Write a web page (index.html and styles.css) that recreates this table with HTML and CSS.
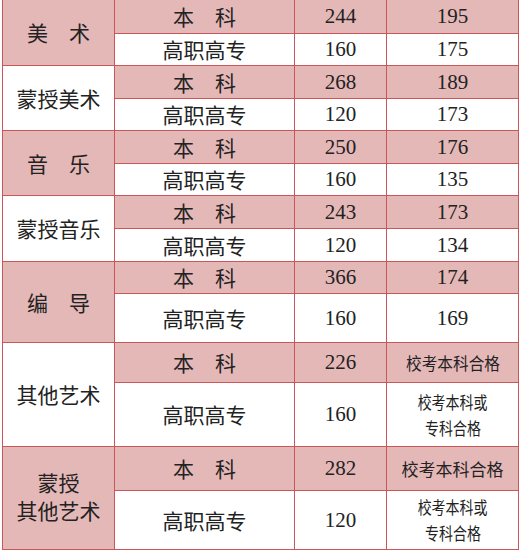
FILE: index.html
```html
<!DOCTYPE html>
<html lang="zh">
<head>
<meta charset="utf-8">
<title>艺术类分数线</title>
<link rel="stylesheet" href="styles.css">
</head>
<body>
<div class="grid">
  <div class="c cat pink span2">美　术</div>
  <div class="c pink">本　科</div>
  <div class="c num pink">244</div>
  <div class="c num pink">195</div>
  <div class="c">高职高专</div>
  <div class="c num">160</div>
  <div class="c num">175</div>

  <div class="c cat span2">蒙授美术</div>
  <div class="c pink">本　科</div>
  <div class="c num pink">268</div>
  <div class="c num pink">189</div>
  <div class="c">高职高专</div>
  <div class="c num">120</div>
  <div class="c num">173</div>

  <div class="c cat pink span2">音　乐</div>
  <div class="c pink">本　科</div>
  <div class="c num pink">250</div>
  <div class="c num pink">176</div>
  <div class="c">高职高专</div>
  <div class="c num">160</div>
  <div class="c num">135</div>

  <div class="c cat span2">蒙授音乐</div>
  <div class="c pink">本　科</div>
  <div class="c num pink">243</div>
  <div class="c num pink">173</div>
  <div class="c">高职高专</div>
  <div class="c num">120</div>
  <div class="c num">134</div>

  <div class="c cat pink span2">编　导</div>
  <div class="c pink">本　科</div>
  <div class="c num pink">366</div>
  <div class="c num pink">174</div>
  <div class="c">高职高专</div>
  <div class="c num">160</div>
  <div class="c num">169</div>

  <div class="c cat span2">其他艺术</div>
  <div class="c pink">本　科</div>
  <div class="c num pink">226</div>
  <div class="c small pink"><span class="sq">校考本科合格</span></div>
  <div class="c">高职高专</div>
  <div class="c num">160</div>
  <div class="c small two"><span class="sq">校考本科或</span><span class="sq">专科合格</span></div>

  <div class="c cat pink span2 stack"><span class="ln">蒙授</span><span class="ln">其他艺术</span></div>
  <div class="c pink">本　科</div>
  <div class="c num pink">282</div>
  <div class="c small pink"><span class="sq wide">校考本科合格</span></div>
  <div class="c">高职高专</div>
  <div class="c num">120</div>
  <div class="c small two"><span class="sq">校考本科或</span><span class="sq">专科合格</span></div>
</div>
</body>
</html>
```

FILE: styles.css
```css
html, body {
  margin: 0;
  padding: 0;
  background: #ffffff;
}

.grid {
  display: grid;
  grid-template-columns: 111px 179px 91px 131px;
  grid-template-rows: 33px 31px 32px 31px 32px 31px 32px 32px 31px 48px 39px 63px 43px 58px;
  gap: 1px;
  padding: 1px;
  margin: -1px 0 0 2px;
  width: max-content;
  background: #c9575a;
  font-family: "Noto Sans CJK SC", "Noto Sans", sans-serif;
  font-size: 21px;
  color: #222222;
}

.c {
  background: #ffffff;
  display: flex;
  align-items: center;
  justify-content: center;
  line-height: 1;
  white-space: nowrap;
}

.pink {
  background: #e5b8b8;
}

.span2 {
  grid-row: span 2;
}

.num {
  font-family: "Liberation Serif", "DejaVu Serif", serif;
  font-size: 21px;
}

.stack {
  flex-direction: column;
  gap: 2px;
  padding-bottom: 4px;
}

.ln {
  display: block;
  line-height: 26px;
  height: 26px;
}

.small {
  font-size: 17px;
}

.two {
  flex-direction: column;
  line-height: 26px;
}

.sq {
  display: inline-block;
  transform: scaleX(0.92);
}

.two .sq {
  transform: scaleX(0.82);
}

.wide {
  transform: none;
}
```
